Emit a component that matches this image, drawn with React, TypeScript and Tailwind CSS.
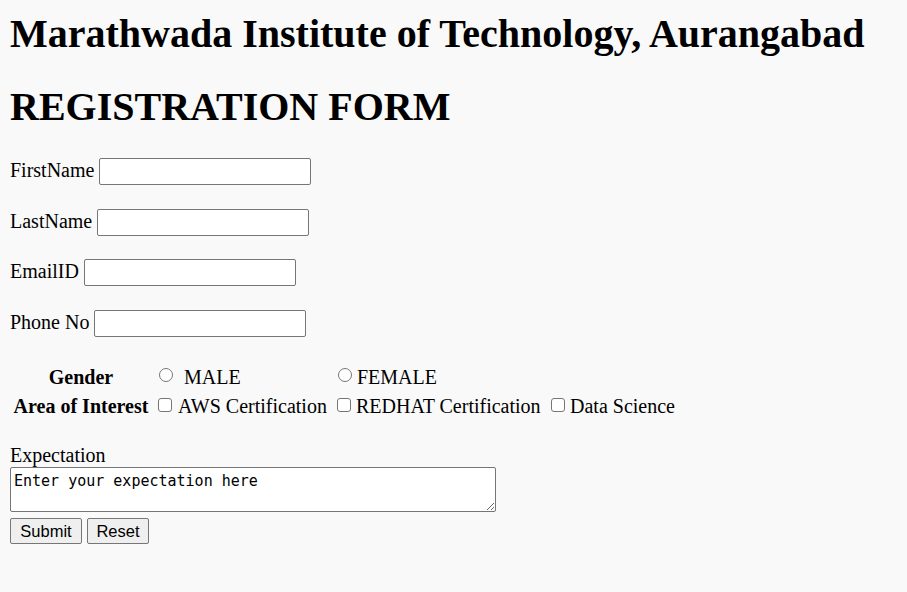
const field = "w-[212px] h-[27px] border border-[#767676] rounded-[2px] bg-white";
const radio = "appearance-none m-0 ml-[6px] mt-[7px] w-[14px] h-[14px] rounded-full border border-[#767676] bg-white";
const check = "appearance-none m-0 ml-[5px] mt-[8px] w-[14px] h-[14px] rounded-[3px] border border-[#767676] bg-white";

function Row({ label, type, className }: { label: string; type: string; className?: string }) {
  return (
    <div className={`flex items-start gap-[5px] ${className ?? ""}`}>
      <span className="pt-[1px]">{label}</span>
      <input type={type} className={field} />
    </div>
  );
}

export default function App() {
  return (
    <div className="min-h-screen bg-[#f9f9f9] px-[10px] pt-[11px] text-black font-['Liberation_Serif',serif] text-[20px] leading-[23px]">
      <h1 className="text-[40px] leading-[46px] font-bold">Marathwada Institute of Technology, Aurangabad</h1>
      <h1 className="mt-[27px] text-[40px] leading-[46px] font-bold">REGISTRATION FORM</h1>

      <form className="mt-[28px]" onSubmit={(e) => e.preventDefault()}>
        <Row label="FirstName" type="text" />
        <Row label="LastName" type="text" className="mt-[24px]" />
        <Row label="EmailID" type="email" className="mt-[23px]" />
        <Row label="Phone No" type="tel" className="mt-[24px]" />

        <div className="mt-[24px] grid grid-cols-[134px_174px_209px_auto] gap-x-[5px] pl-[4px]">
          <div className="h-[29px] pt-[5px] flex justify-center font-bold whitespace-nowrap">Gender</div>
          <label className="h-[29px] flex items-start">
            <input type="radio" name="gender" className={radio} />
            <span className="ml-[11px] pt-[5px]">MALE</span>
          </label>
          <label className="h-[29px] flex items-start">
            <input type="radio" name="gender" className={radio} />
            <span className="ml-[5px] pt-[5px]">FEMALE</span>
          </label>
          <div />

          <div className="h-[29px] pt-[5px] flex justify-center font-bold whitespace-nowrap">Area of Interest</div>
          <label className="h-[29px] flex items-start whitespace-nowrap">
            <input type="checkbox" className={check} />
            <span className="ml-[6px] pt-[5px]">AWS Certification</span>
          </label>
          <label className="h-[29px] flex items-start whitespace-nowrap">
            <input type="checkbox" className={check} />
            <span className="ml-[5px] pt-[5px]">REDHAT Certification</span>
          </label>
          <label className="h-[29px] flex items-start whitespace-nowrap">
            <input type="checkbox" className={check} />
            <span className="ml-[5px] pt-[5px]">Data Science</span>
          </label>
        </div>

        <div className="mt-[25px]">Expectation</div>
        <textarea
          defaultValue="Enter your expectation here"
          className="block w-[486px] h-[45px] border border-[#767676] rounded-[2px] bg-white px-[3px] pt-[2px] font-['DejaVu_Sans_Mono',monospace] text-[15px] leading-normal"
        />

        <div className="mt-[6px] flex gap-[5px] font-['Liberation_Sans',Arial,sans-serif] text-[16.5px]">
          <button type="submit" className="w-[72px] h-[26px] border border-[#767676] rounded-[2px] bg-[#efefef]">Submit</button>
          <button type="reset" className="w-[62px] h-[26px] border border-[#767676] rounded-[2px] bg-[#efefef]">Reset</button>
        </div>
      </form>
    </div>
  );
}
